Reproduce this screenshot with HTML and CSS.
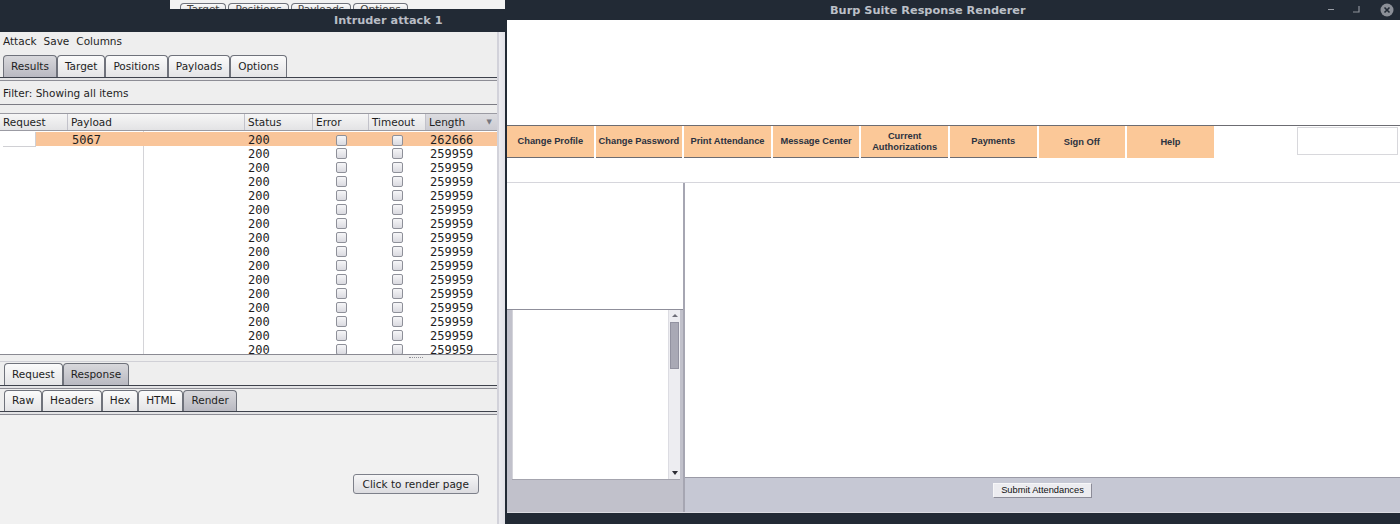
FILE: index.html
```html
<!DOCTYPE html>
<html>
<head>
<meta charset="utf-8">
<title>Intruder attack 1</title>
<link rel="stylesheet" href="styles.css">
</head>
<body>
<div class="screen">
  <section class="intruder">
    <div class="behind">
      <div class="behind-dark"></div>
      <div class="behind-win">
        <span class="btab">Target</span><span class="btab">Positions</span><span class="btab">Payloads</span><span class="btab">Options</span>
      </div>
    </div>
    <div class="wtitle ltitle">Intruder attack 1</div>
    <div class="ibody">
      <div class="imain">
        <div class="menubar"><span>Attack</span><span>Save</span><span>Columns</span></div>
        <div class="tabs bar1">
          <span class="tab sel">Results</span><span class="tab">Target</span><span class="tab">Positions</span><span class="tab">Payloads</span><span class="tab">Options</span>
        </div>
        <div class="tabline"></div>
        <div class="filter">Filter: Showing all items</div>
        <div class="fgap"></div>
        <div class="thead">
          <div class="th">Request</div><div class="th">Payload</div><div class="th">Status</div><div class="th">Error</div><div class="th">Timeout</div><div class="th sorted">Length<span class="arrow">▼</span></div><div class="th">C</div>
        </div>
        <div class="tbody">
          <div class="tr hl"><div class="td"><span class="reqbox"></span></div><div class="td">5067</div><div class="td">200</div><div class="td c"><span class="cb"></span></div><div class="td c"><span class="cb"></span></div><div class="td">262666</div></div>
          <div class="tr"><div class="td"></div><div class="td"></div><div class="td">200</div><div class="td c"><span class="cb"></span></div><div class="td c"><span class="cb"></span></div><div class="td">259959</div></div>
          <div class="tr"><div class="td"></div><div class="td"></div><div class="td">200</div><div class="td c"><span class="cb"></span></div><div class="td c"><span class="cb"></span></div><div class="td">259959</div></div>
          <div class="tr"><div class="td"></div><div class="td"></div><div class="td">200</div><div class="td c"><span class="cb"></span></div><div class="td c"><span class="cb"></span></div><div class="td">259959</div></div>
          <div class="tr"><div class="td"></div><div class="td"></div><div class="td">200</div><div class="td c"><span class="cb"></span></div><div class="td c"><span class="cb"></span></div><div class="td">259959</div></div>
          <div class="tr"><div class="td"></div><div class="td"></div><div class="td">200</div><div class="td c"><span class="cb"></span></div><div class="td c"><span class="cb"></span></div><div class="td">259959</div></div>
          <div class="tr"><div class="td"></div><div class="td"></div><div class="td">200</div><div class="td c"><span class="cb"></span></div><div class="td c"><span class="cb"></span></div><div class="td">259959</div></div>
          <div class="tr"><div class="td"></div><div class="td"></div><div class="td">200</div><div class="td c"><span class="cb"></span></div><div class="td c"><span class="cb"></span></div><div class="td">259959</div></div>
          <div class="tr"><div class="td"></div><div class="td"></div><div class="td">200</div><div class="td c"><span class="cb"></span></div><div class="td c"><span class="cb"></span></div><div class="td">259959</div></div>
          <div class="tr"><div class="td"></div><div class="td"></div><div class="td">200</div><div class="td c"><span class="cb"></span></div><div class="td c"><span class="cb"></span></div><div class="td">259959</div></div>
          <div class="tr"><div class="td"></div><div class="td"></div><div class="td">200</div><div class="td c"><span class="cb"></span></div><div class="td c"><span class="cb"></span></div><div class="td">259959</div></div>
          <div class="tr"><div class="td"></div><div class="td"></div><div class="td">200</div><div class="td c"><span class="cb"></span></div><div class="td c"><span class="cb"></span></div><div class="td">259959</div></div>
          <div class="tr"><div class="td"></div><div class="td"></div><div class="td">200</div><div class="td c"><span class="cb"></span></div><div class="td c"><span class="cb"></span></div><div class="td">259959</div></div>
          <div class="tr"><div class="td"></div><div class="td"></div><div class="td">200</div><div class="td c"><span class="cb"></span></div><div class="td c"><span class="cb"></span></div><div class="td">259959</div></div>
          <div class="tr"><div class="td"></div><div class="td"></div><div class="td">200</div><div class="td c"><span class="cb"></span></div><div class="td c"><span class="cb"></span></div><div class="td">259959</div></div>
          <div class="tr"><div class="td"></div><div class="td"></div><div class="td">200</div><div class="td c"><span class="cb"></span></div><div class="td c"><span class="cb"></span></div><div class="td">259959</div></div>
        </div>
        <div class="splitter"><span class="grip"></span></div>
        <div class="tabs bar2">
          <span class="tab">Request</span><span class="tab sel">Response</span>
        </div>
        <div class="tabline"></div>
        <div class="tabs bar3">
          <span class="tab">Raw</span><span class="tab">Headers</span><span class="tab">Hex</span><span class="tab">HTML</span><span class="tab sel">Render</span>
        </div>
        <div class="tabline"></div>
        <div class="render-area">
          <button class="render-btn">Click to render page</button>
        </div>
      </div>
      <div class="istrip"></div>
    </div>
  </section>

  <section class="renderer">
    <div class="wtitle rtitle">
      <span class="rtitle-text">Burp Suite Response Renderer</span>
      <span class="wctl">
        <span class="wmin"></span>
        <svg class="wrestore" width="8" height="8" viewBox="0 0 8 8"><path d="M1 7 H7 V1" fill="none" stroke="#8e929a" stroke-width="1.2"/></svg>
        <svg class="wclose" width="14" height="14" viewBox="0 0 14 14"><circle cx="7" cy="7" r="6.5" fill="#8b8f97"/><path d="M4.5 4.5 L9.5 9.5 M9.5 4.5 L4.5 9.5" stroke="#222a35" stroke-width="1.6"/></svg>
      </span>
    </div>
    <div class="page-top"></div>
    <nav class="navrow">
      <a class="navcell bb">Change Profile</a>
      <a class="navcell bb">Change Password</a>
      <a class="navcell bb">Print Attendance</a>
      <a class="navcell bb">Message Center</a>
      <a class="navcell bb">Current Authorizations</a>
      <a class="navcell bb">Payments</a>
      <a class="navcell">Sign Off</a>
      <a class="navcell">Help</a>
      <span class="navbox"></span>
    </nav>
    <div class="navgap"></div>
    <div class="content">
      <aside class="sidebar">
        <div class="side-top"></div>
        <div class="side-bottom">
          <div class="listbox">
            <div class="lb-text"></div>
            <div class="lb-scroll">
              <span class="sb-up"></span>
              <span class="sb-thumb"></span>
              <span class="sb-track"></span>
              <span class="sb-down"></span>
            </div>
          </div>
        </div>
      </aside>
      <main class="main">
        <div class="main-white"></div>
        <div class="submitbar"><button class="submit-btn">Submit Attendances</button></div>
      </main>
    </div>
    <div class="rfoot"></div>
  </section>
</div>
</body>
</html>
```

FILE: styles.css
```css
* { box-sizing: border-box; margin: 0; padding: 0; }
html, body { width: 1400px; height: 524px; overflow: hidden; }
body { background: #222a35; font-family: "DejaVu Sans", sans-serif; color: #1e1e1e; }

.screen { display: flex; width: 1400px; height: 524px; }

/* ---------- Left window (Burp Intruder) ---------- */
.intruder { width: 505px; flex: none; display: flex; flex-direction: column; background: #222a35; }

.behind { height: 9px; display: flex; flex: none; overflow: hidden; }
.behind-dark { width: 170px; }
.behind-win { flex: 1; background: #f2f2f2; display: flex; align-items: flex-start; padding: 3px 0 0 10px; gap: 2px; overflow: hidden; }
.btab { height: 6px; overflow: hidden; border: 1px solid #6f727b; border-bottom: none; border-radius: 4px 4px 0 0; background: linear-gradient(#fbfbfb, #e8e8ea); font-size: 10.5px; line-height: 11px; padding: 0 6px; color: #444; }

.wtitle { font-family: "DejaVu Sans", sans-serif; font-weight: bold; font-size: 11.3px; color: #b9bdc5; }
.ltitle { height: 23px; line-height: 23px; padding-left: 334px; flex: none; white-space: nowrap; }

.ibody { flex: 1; display: flex; background: #eeeeee; min-height: 0; }
.imain { flex: 1; min-width: 0; display: flex; flex-direction: column; overflow: hidden; }
.istrip { width: 8px; flex: none; background: linear-gradient(to right, #d2d2da 0, #d2d2da 2px, #ececf0 2px, #e2e2e8 8px); }

.menubar { height: 20px; display: flex; gap: 7px; padding-left: 3px; font-size: 10.5px; line-height: 19px; flex: none; }

.tabs { display: flex; align-items: flex-end; padding-left: 3px; flex: none; }
.bar1 { height: 25px; }
.bar2 { height: 23px; padding-left: 4px; }
.bar3 { height: 22px; padding-left: 4px; }
.tab { border: 1px solid #6f727b; border-bottom: none; border-radius: 4px 4px 0 0; padding: 0 7px; font-size: 10.5px; background: linear-gradient(#fbfbfb, #e4e4e6); white-space: nowrap; }
.bar1 .tab { height: 22px; line-height: 20px; }
.bar2 .tab { height: 22px; line-height: 20px; }
.bar3 .tab { height: 21px; line-height: 19px; }
.tab.sel { background: linear-gradient(#d8d8dc, #b9b9c1); }

.tabline { height: 4px; flex: none; border-top: 1px solid #3e424c; border-bottom: 1px solid #8d8d95; background: #e4e4e6; }

.filter { height: 24px; line-height: 24px; padding-left: 3px; font-size: 10.5px; border-bottom: 1px solid #7c7c84; flex: none; }
.fgap { height: 8px; flex: none; }

.thead, .tr { display: grid; grid-template-columns: 68px 177px 68px 56px 57px 72px 20px; }
.thead { height: 18px; flex: none; border-top: 1px solid #9b9ba3; border-bottom: 1px solid #9b9ba3; background: linear-gradient(#f6f6f6, #e3e3e5); }
.th { font-size: 10.5px; line-height: 16px; padding-left: 3px; border-right: 1px solid #c2c2ca; white-space: nowrap; overflow: hidden; position: relative; }
.th.sorted { background: linear-gradient(#dcdce0, #cbcbd2); }
.arrow { position: absolute; right: 5px; top: 0; font-size: 7px; color: #77777f; }

.tbody { height: 223px; flex: none; overflow: hidden; padding-top: 1px; background: #fff linear-gradient(to right, transparent 143px, #d4d4d8 143px, #d4d4d8 144px, transparent 144px); }
.tr { height: 14px; font-family: "DejaVu Sans Mono", monospace; font-size: 12px; line-height: 14px; }
.tr .td { padding: 1px 0 0 4px; white-space: nowrap; overflow: hidden; }
.tr .td:nth-child(3) { padding-left: 3px; }
.tr .td.c { display: flex; align-items: center; justify-content: center; padding: 1px 0 0 0; }
.tr .td:first-child { padding: 0 0 0 3px; overflow: visible; }
.tr.hl { background: #f9c59a; }
.tr.hl .td:first-child { background: linear-gradient(to right, #fff 3px, transparent 3px); }
.reqbox { display: block; width: 33px; height: 15px; background: #fff; border-right: 1px solid #d0d0d4; border-bottom: 1px solid #d0d0d4; }
.cb { display: block; width: 11px; height: 11px; border: 1px solid #8e9099; border-radius: 2px; background: linear-gradient(#f6f6f8, #dadae0); }

.splitter { height: 8px; flex: none; border-top: 1px solid #8a8a92; border-bottom: 1px solid #d0d0d6; display: flex; justify-content: flex-end; padding-right: 74px; }
.grip { width: 14px; height: 2px; margin-top: 2px; border-top: 1px dotted #909098; }

.render-area { flex: 1; display: flex; justify-content: flex-end; align-items: flex-start; padding: 59px 18px 0 0; background: #f1f1f1; }
.render-btn { font-family: "DejaVu Sans", sans-serif; font-size: 10.5px; height: 20px; padding: 0 9px; border: 1px solid #7d808a; border-radius: 3px; background: linear-gradient(#f6f6f7, #dcdce0); color: #1e1e1e; line-height: 18px; }

/* ---------- Right window (Response renderer) ---------- */
.renderer { flex: 1; display: flex; flex-direction: column; border-left: 2px solid #222a35; background: #fff; min-width: 0; }
.rtitle { height: 20px; flex: none; background: #222a35; display: flex; align-items: center; padding-left: 323px; white-space: nowrap; }
.rtitle-text { color: #bcc0c8; }
.wctl { margin-left: auto; display: flex; align-items: center; padding-right: 6px; }
.wmin { width: 6px; height: 1px; background: #9a9ea6; margin-right: 18px; margin-top: -2px; }
.wrestore { margin-right: 20px; margin-top: -2px; }
.wclose { display: block; }

.page-top { height: 105px; flex: none; }

.navrow { height: 33px; flex: none; display: flex; gap: 2px; border-top: 1px solid #6c6c72; }
.navcell { width: 86.6px; flex: none; height: 32px; background: #fbc898; display: flex; align-items: center; justify-content: center; text-align: center; padding: 0 2px; font-family: "Liberation Sans", Arial, sans-serif; font-weight: bold; font-size: 9.3px; line-height: 11px; color: #2b3240; }
.navcell.bb { border-bottom: 1px solid #6c6c72; }
.navbox { margin-left: auto; margin-right: 2px; margin-top: 1px; width: 101px; height: 28px; border: 1px solid #d8d8dc; }

.navgap { height: 24px; flex: none; }

.content { flex: 1; display: flex; border-top: 1px solid #d6d6dc; min-height: 0; }
.sidebar { width: 178px; flex: none; display: flex; flex-direction: column; border-right: 2px solid #a6a6b2; }
.side-top { height: 126px; flex: none; background: #fff; }
.side-bottom { flex: 1; background: #c1c1cb; border-top: 1px solid #8f8f9b; padding-left: 5px; }
.listbox { width: 168px; height: 170px; display: flex; background: #fff; border-bottom: 1px solid #a4a4ae; }
.lb-text { flex: 1; border-left: 1px solid #d4d4da; }
.lb-scroll { width: 12px; display: flex; flex-direction: column; background: #ededf1; border-left: 1px solid #dcdce2; }
.sb-up, .sb-down { height: 11px; flex: none; position: relative; }
.sb-up::after { content: ""; position: absolute; left: 3px; top: 4px; border-left: 3px solid transparent; border-right: 3px solid transparent; border-bottom: 3px solid #6e6e78; }
.sb-down::after { content: ""; position: absolute; left: 3px; top: 3px; border-left: 3px solid transparent; border-right: 3px solid transparent; border-top: 4px solid #2c2c34; }
.sb-thumb { height: 47px; flex: none; margin: 1px 1px 0 1px; background: #a9a9b5; border: 1px solid #9292a0; }
.sb-track { flex: 1; }

.main { flex: 1; display: flex; flex-direction: column; min-width: 0; }
.main-white { flex: 1; background: #fff; }
.submitbar { height: 35px; flex: none; background: #c6c8d4; border-top: 1px solid #9a9aa6; display: flex; justify-content: center; align-items: flex-start; padding-top: 5px; }
.submit-btn { height: 15px; padding: 0 7px; font-family: "Liberation Sans", Arial, sans-serif; font-size: 9.3px; line-height: 13px; color: #111; background: #ececf0; border: 1px solid; border-color: #f6f6f8 #8c8c98 #8c8c98 #f6f6f8; }

.rfoot { height: 12px; flex: none; background: #222a35; border-top: 1px solid #dcdce2; }
```
